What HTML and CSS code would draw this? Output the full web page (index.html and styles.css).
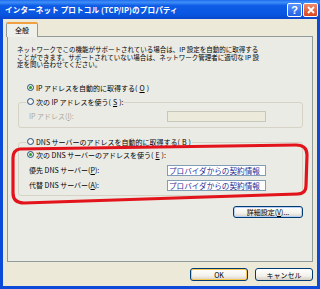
FILE: index.html
```html
<!DOCTYPE html>
<html lang="ja">
<head>
    <meta charset="UTF-8">
    <title>インターネット プロトコル (TCP/IP)のプロパティ</title>
    <link rel="stylesheet" href="styles.css">
</head>
<body>

<div class="window">
    <!-- タイトルバー -->
    <div class="titlebar">
        <span class="title">インターネット プロトコル (TCP/IP)のプロパティ</span>
        <span class="tbtn help">?</span>
        <span class="tbtn close">
            <svg width="8" height="8" viewBox="0 0 8 8"><path d="M1 1L7 7M7 1L1 7" stroke="#fff" stroke-width="1.8"/></svg>
        </span>
    </div>

    <div class="body">
        <div class="tabs"><span class="tab">全般</span></div>

        <div class="panel">
            <p class="intro">ネットワークでこの機能がサポートされている場合は、IP 設定を自動的に取得する<br>ことができます。サポートされていない場合は、ネットワーク管理者に適切な IP 設<br>定を問い合わせてください。</p>

            <div class="radio-row first"><span class="radio checked"></span>IP アドレスを自動的に取得する(<u>O</u>)</div>

            <div class="group ip">
                <div class="caption"><span class="radio"></span>次の IP アドレスを使う(<u>S</u>):</div>
                <div class="field-row first">
                    <span class="label disabled">IP アドレス(<u>I</u>):</span>
                    <span class="field off"></span>
                </div>
            </div>

            <div class="group dns">
                <div class="caption"><span class="radio"></span>DNS サーバーのアドレスを自動的に取得する(<u>B</u>)</div>
                <div class="radio-row inner"><span class="radio checked"></span>次の DNS サーバーのアドレスを使う(<u>E</u>):</div>
                <div class="field-row pref">
                    <span class="label">優先 DNS サーバー(<u>P</u>):</span>
                    <span class="field">プロバイダからの契約情報</span>
                </div>
                <div class="field-row">
                    <span class="label">代替 DNS サーバー(<u>A</u>):</span>
                    <span class="field">プロバイダからの契約情報</span>
                </div>
            </div>

            <div class="detail-row"><button class="btn detail">詳細設定(<u>V</u>)...</button></div>
        </div>

        <div class="footer">
            <button class="btn default">OK</button>
            <button class="btn">キャンセル</button>
        </div>
    </div>

    <!-- 赤い囲み -->
    <svg class="mark" width="320" height="289" viewBox="0 0 320 289">
        <path d="M20 149L296 145Q307 145 307 155L306 186Q306 194 297 194L24 203Q13 203 13 193L13 158Q13 150 20 149Z" fill="none" stroke="#e3131b" stroke-width="3.2"/>
    </svg>
</div>

</body>
</html>
```

FILE: styles.css
```css
body { margin: 0; font-family: "Noto Sans CJK JP", "Noto Sans", sans-serif; font-size: 7px; color: #000; }
u { text-decoration: underline; }

.window { position: relative; width: 320px; height: 289px; box-sizing: border-box; background: #0c4bd8; display: flex; flex-direction: column; }
.titlebar { height: 19px; display: flex; align-items: center; gap: 1px; padding: 0 2px 0 5px; background: linear-gradient(#1e6cf0, #3f8ff8 12%, #0e5ce6 30%, #0856e2 75%, #0a47cc); color: #fff; font-weight: bold; font-size: 7.6px; }
.title { flex: 1; white-space: nowrap; letter-spacing: 0.1px; }
.tbtn { width: 15px; height: 14px; box-sizing: border-box; border: 1px solid #fff; border-radius: 2px; display: flex; align-items: center; justify-content: center; font-family: "Liberation Sans", sans-serif; font-size: 11px; font-weight: bold; }
.help { background: linear-gradient(#5a94ff, #2260e6); }
.close { background: linear-gradient(#f08a6a, #d8461e); }

.body { flex: 1; margin: 0 3px 3px; background: #ece9d8; padding: 3px 4px 0; }
.tabs { height: 14px; position: relative; z-index: 1; }
.tab { display: inline-block; width: 32px; height: 15px; margin-left: -1px; box-sizing: border-box; border: 1px solid #919b9c; border-top: 2px solid #f0a040; border-bottom: none; border-radius: 2px 2px 0 0; background: #f0f0ea; text-align: center; line-height: 12px; }

.panel { height: 226px; box-sizing: border-box; border: 1px solid #919b9c; background: #ebebe5; padding: 0 9px 0 10px; }
.intro { margin: 9px 0 0 -1px; font-size: 6.5px; line-height: 7.6px; white-space: nowrap; }

.radio-row, .caption { height: 10px; display: flex; align-items: center; gap: 2px; white-space: nowrap; }
.radio-row.first { margin: 14.2px 0 0 9px; }
.radio-row.inner { margin: 3px 0 0 8px; }
.radio { flex: none; width: 7px; height: 7px; box-sizing: border-box; border: 1px solid #1c5180; border-radius: 50%; background: radial-gradient(#fff, #e0ded6); display: flex; align-items: center; justify-content: center; }
.radio.checked::after { content: ""; width: 3px; height: 3px; border-radius: 50%; background: #21a121; }

.group { border: 1px solid #d6d3c6; border-radius: 3px; }
.group.ip { margin-top: 9px; padding-bottom: 5px; }
.group.dns { margin-top: 14px; padding-bottom: 4px; }
.caption { width: max-content; margin: -6px 0 0 7px; padding: 0 1px; background: #ebebe5; }

.field-row { display: flex; align-items: center; height: 11px; margin-top: 4px; padding-left: 10px; }
.field-row.pref { margin-top: 5px; }
.label { width: 138px; white-space: nowrap; }
.label.disabled { color: #aca899; }
.field { width: 99px; height: 11px; box-sizing: border-box; border: 1px solid #7f9db9; background: #fff; color: #2c2c94; font-size: 7.6px; line-height: 9px; padding-left: 1px; white-space: nowrap; overflow: hidden; }
.field.off { background: #ebeadb; border-color: #c9c7ba; }

.detail-row { display: flex; justify-content: flex-end; margin-top: 10px; }
.btn { font-family: inherit; font-size: 7px; color: #000; height: 12px; padding: 0; border: 1px solid #003c74; border-radius: 3px; background: linear-gradient(#fff, #f3f2ec 60%, #d6d0c5); }
.btn.detail { width: 70px; box-shadow: inset 0 0 0 1px #b8d0f8; }
.footer { display: flex; justify-content: flex-end; gap: 7px; margin-top: 6px; }
.footer .btn { width: 58px; height: 13px; }
.btn.default { box-shadow: inset 0 0 0 1px #f8c850; }

.mark { position: absolute; left: 0; top: 0; pointer-events: none; }
```
